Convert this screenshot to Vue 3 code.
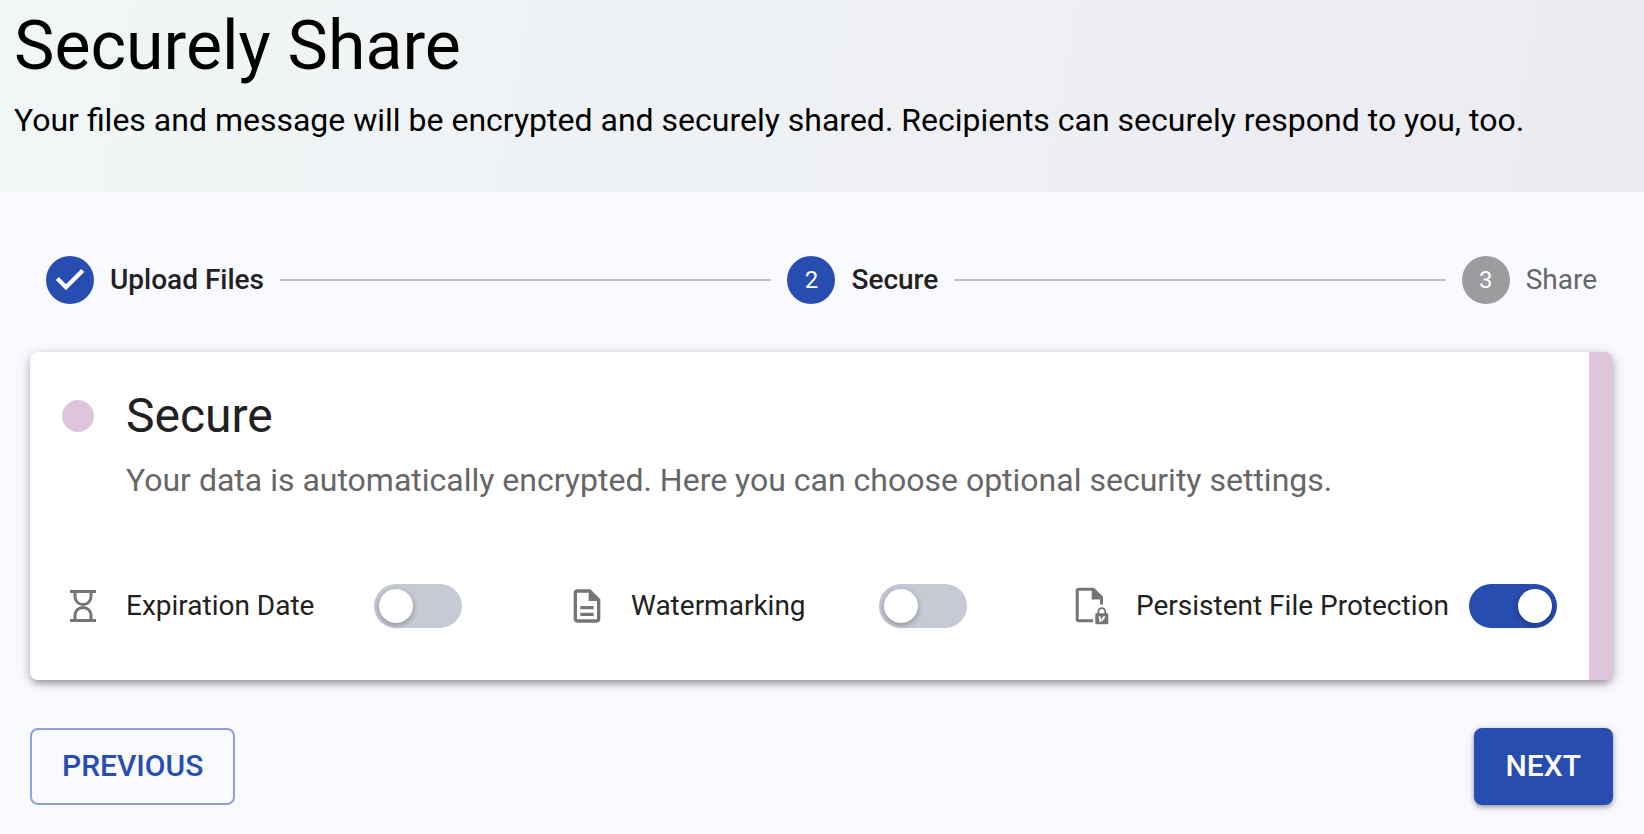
<script setup>
import { reactive } from 'vue'

const steps = [
  { id: 1, label: 'Upload Files', state: 'done' },
  { id: 2, label: 'Secure', state: 'active' },
  { id: 3, label: 'Share', state: 'pending' }
]

const options = reactive([
  { id: 'expiration', label: 'Expiration Date', on: false },
  { id: 'watermark', label: 'Watermarking', on: false },
  { id: 'protection', label: 'Persistent File Protection', on: true }
])
</script>

<template>
  <div class="page">
    <header class="hero">
      <h1 class="hero-title">Securely Share</h1>
      <p class="hero-text">Your files and message will be encrypted and securely shared. Recipients can securely respond to you, too.</p>
    </header>

    <main class="content">
      <ol class="stepper">
        <li v-for="step in steps" :key="step.id" class="step" :class="step.state">
          <span class="badge">
            <svg v-if="step.state === 'done'" class="check" viewBox="0 0 24 24" aria-hidden="true">
              <path d="M10 17l-5-5 1.4-1.4 3.6 3.6 7.6-7.6L19 8l-9 9z" fill="currentColor" stroke="currentColor" stroke-width=".2" />
            </svg>
            <template v-else>{{ step.id }}</template>
          </span>
          <span class="step-label">{{ step.label }}</span>
        </li>
      </ol>

      <section class="card">
        <div class="intro">
          <span class="dot"></span>
          <h2 class="card-title">Secure</h2>
          <p class="card-text">Your data is automatically encrypted. Here you can choose optional security settings.</p>
        </div>

        <div class="options">
          <div v-for="option in options" :key="option.id" class="option">
            <svg class="icon" viewBox="0 0 40 40" aria-hidden="true">
              <g v-if="option.id === 'expiration'" fill="none" stroke="currentColor" stroke-width="3">
                <path d="M8 5.5h26M8 34.5h26" />
                <path d="M13 6v4.5c0 4.600 3.400 8 8 8s8-3.400 8-8V6M13 34v-4.500c0-4.600 3.400-8 8-8s8 3.400 8 8V34" />
              </g>
              <path
                v-else-if="option.id === 'watermark'"
                transform="scale(1.6667)"
                fill="currentColor"
                d="M8 16h8v2H8zm0-4h8v2H8zm6-10H6c-1.100 0-2 .9-2 2v16c0 1.100.89 2 1.990 2H18c1.100 0 2-.9 2-2V8l-6-6zm4 18H6V4h7v5h5v11z"
              />
              <g v-else>
                <path d="M21 34.700H7Q5.200 34.700 5.200 33V5Q5.200 3.200 7 3.200H21L29.500 11.500V18.500" fill="none" stroke="currentColor" stroke-width="3" />
                <path d="M19.700 2H22L31 11V13.500H19.700Z" fill="currentColor" />
                <path d="M26.300 28.500v-2.800a3.500 3.500 0 0 1 7 0v2.800" fill="none" stroke="currentColor" stroke-width="1.800" />
                <rect x="23.300" y="27.300" width="13" height="11" rx="1.200" fill="currentColor" />
                <path d="M26.600 30.300h1.700l.8 3.600 2-3.600h2.200q-.8 4.200-5.600 6z" fill="#fff" />
              </g>
            </svg>
            <label class="option-label" :for="option.id">{{ option.label }}</label>
            <input :id="option.id" v-model="option.on" class="switch" type="checkbox" role="switch" />
          </div>
        </div>
      </section>

      <div class="actions">
        <button type="button" class="btn outlined">PREVIOUS</button>
        <button type="button" class="btn filled">NEXT</button>
      </div>
    </main>
  </div>
</template>

<style>
body {
  background: #f9faff;
}
</style>

<style scoped>
.page {
  font-family: Roboto, "Liberation Sans", sans-serif;
  color: #212121;
}

h1,
h2,
p {
  margin: 0;
  font-weight: 400;
}

.hero {
  padding: 4px 14px 48px;
  background: linear-gradient(100deg, #f1f6f6, #edeef3 75%, #ebecf0);
  color: #000;
}

.hero-title {
  font-size: 68px;
  line-height: 84px;
}

.hero-text {
  padding-top: 8px;
  font-size: 32px;
  line-height: 48px;
}

.content {
  padding: 64px 31px 28px 30px;
}

.stepper {
  display: flex;
  align-items: center;
  margin: 0;
  padding: 0 16px;
  list-style: none;
}

.step {
  display: flex;
  align-items: center;
  gap: 16px;
  white-space: nowrap;
}

.step:not(:first-child) {
  flex: 1 1 auto;
}

.step:not(:first-child)::before {
  content: "";
  flex: 1;
  height: 2px;
  margin-left: 16px;
  background: #bdbdbd;
}

.badge {
  display: flex;
  align-items: center;
  justify-content: center;
  width: 48px;
  height: 48px;
  border-radius: 50%;
  background: #274db1;
  color: #fff;
  font-size: 24px;
}

.pending .badge {
  background: #9c9c9f;
}

.check {
  width: 48px;
  height: 48px;
}

.step-label {
  font-size: 28px;
  line-height: 40px;
  font-weight: 500;
}

.pending .step-label {
  color: #656668;
  font-weight: 400;
}

.card {
  margin-top: 48px;
  padding: 32px 12px 50px 32px;
  border-right: 24px solid #dfc5dc;
  border-radius: 8px;
  background: #fff;
  box-shadow: 0 6px 6px -4px rgba(0, 0, 0, 0.2), 0 4px 8px rgba(0, 0, 0, 0.2), 0 2px 16px rgba(0, 0, 0, 0.12);
}

.intro {
  display: grid;
  grid-template-columns: 32px 1fr;
  column-gap: 32px;
  align-items: center;
}

.dot {
  width: 32px;
  height: 32px;
  border-radius: 50%;
  background: #dfc5dc;
}

.card-title {
  font-size: 48px;
  line-height: 64px;
}

.card-text {
  grid-column: 2;
  color: #666;
  font-size: 32px;
  line-height: 64px;
}

.options {
  display: grid;
  grid-template-columns: repeat(3, 1fr);
  margin-top: 70px;
}

.option {
  display: flex;
  align-items: center;
  gap: 20px;
  height: 48px;
  white-space: nowrap;
}

.icon {
  flex: none;
  width: 40px;
  height: 40px;
  margin-right: 4px;
  color: #757575;
}

.option-label {
  min-width: 228px;
  font-size: 28px;
  line-height: 40px;
}

.switch {
  appearance: none;
  flex: none;
  display: flex;
  box-sizing: border-box;
  width: 88px;
  height: 44px;
  margin: 0;
  padding: 5px;
  border-radius: 22px;
  background: #c6cad4;
  cursor: pointer;
}

.switch::before {
  content: "";
  width: 34px;
  height: 34px;
  border-radius: 50%;
  background: #fff;
  box-shadow: 0 2px 6px rgba(0, 0, 0, 0.3);
}

.switch:checked {
  justify-content: flex-end;
  background: #274db1;
}

.actions {
  display: flex;
  justify-content: space-between;
  margin-top: 48px;
}

.btn {
  padding: 10px 30px 11px;
  border: 2px solid transparent;
  border-radius: 8px;
  font-family: inherit;
  font-size: 30px;
  line-height: 52px;
  font-weight: 500;
  cursor: pointer;
}

.outlined {
  border-color: #90a3d8;
  background: transparent;
  color: #274db1;
}

.filled {
  border-color: #274db1;
  background: #274db1;
  color: #fff;
  box-shadow: 0 2px 4px rgba(0, 0, 0, 0.3), 0 2px 10px rgba(0, 0, 0, 0.15);
}
</style>
